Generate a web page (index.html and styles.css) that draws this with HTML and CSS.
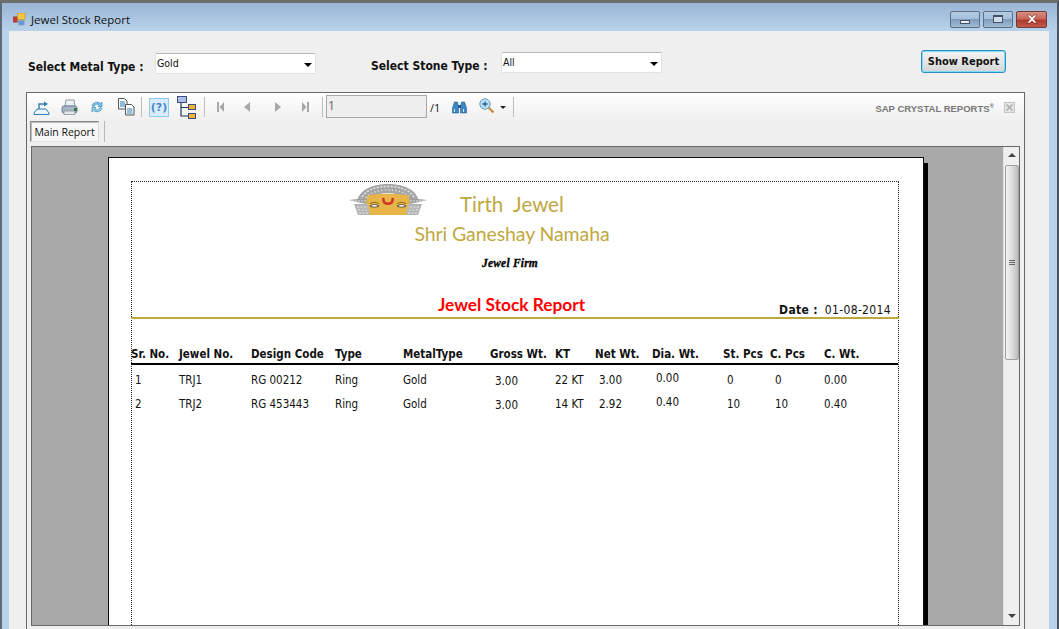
FILE: index.html
```html
<!DOCTYPE html>
<html lang="en">
<head>
<meta charset="utf-8">
<title>Jewel Stock Report</title>
<link rel="stylesheet" href="styles.css">
</head>
<body>
<div class="window">
  <header class="titlebar">
    <svg class="app-icon" width="13" height="13" viewBox="0 0 14 14"><rect x="0" y="4" width="5" height="6" fill="#c33" stroke="#777" stroke-width=".6"/><rect x="5" y="0" width="8" height="7" fill="#f3c640" stroke="#b58a20" stroke-width=".6"/><rect x="6" y="8" width="6" height="5" fill="#6b95dc" stroke="#8aa" stroke-width=".6"/></svg>
    <span class="window-title">Jewel Stock Report</span>
    <div class="caption-buttons">
      <div class="cap cap-min"><span class="min-glyph"></span></div>
      <div class="cap cap-max"><span class="max-glyph"></span></div>
      <div class="cap cap-close">
        <svg width="14" height="10" viewBox="0 0 14 10"><path d="M2 1h3l2 2.200L9 1h3L8.600 5 12 9H9L7 6.800 5 9H2l3.400-4z" fill="#fff" stroke="#6e2a22" stroke-width=".6"/></svg>
      </div>
    </div>
  </header>

  <main class="client">
    <section class="filters">
      <label class="filter-label metal-label">Select Metal Type :</label>
      <div class="combo metal-combo"><span>Gold</span><i class="combo-arrow"></i></div>
      <label class="filter-label stone-label">Select Stone Type :</label>
      <div class="combo stone-combo"><span>All</span><i class="combo-arrow"></i></div>
      <button class="show-btn">Show Report</button>
    </section>

    <section class="viewer">
      <div class="toolbar">
        <svg class="tb t-export" width="17" height="17" viewBox="0 0 17 17"><path d="M1 15.500h15V14L13 10H4L1 14z" fill="#e8f3fb" stroke="#2f7fb5"/><path d="M6 10V5h6" fill="none" stroke="#2f7fb5" stroke-width="1.400"/><path d="M11 2.500l4 2.500-4 2.500z" fill="#2f7fb5"/></svg>
        <svg class="tb t-print" width="17" height="17" viewBox="0 0 17 17"><path d="M5 1h8l1 6H4z" fill="#eef2f6" stroke="#8f9aa6"/><rect x="1" y="7" width="15" height="7" rx="2" fill="#a9b6c5" stroke="#6f7f92"/><rect x="3" y="12" width="11" height="3.500" fill="#e4e9ee" stroke="#7b8794" stroke-width=".7"/><rect x="13" y="9" width="3" height="3" fill="#2c7a3e"/></svg>
        <svg class="tb t-refresh" width="14" height="14" viewBox="0 0 14 14"><path d="M2 6a5 4.500 0 0 1 8.500-2.500L12 2v4.500H8l1.300-1.500A3.200 3 0 0 0 4 6.500z" fill="#7cc4e6" stroke="#3b8fb8" stroke-width=".7"/><path d="M12 8a5 4.500 0 0 1-8.500 2.500L2 12V7.500h4L4.700 9A3.200 3 0 0 0 10 7.500z" fill="#9ad3ec" stroke="#3b8fb8" stroke-width=".7"/></svg>
        <svg class="tb t-copy" width="18" height="18" viewBox="0 0 18 18"><path d="M1.500.500h6L10 3v8H1.500z" fill="#f5f7f9" stroke="#555"/><path d="M3 4h5M3 6h5M3 8h5" stroke="#2f7fb5"/><path d="M8.500 6.500h6L17 9v8H8.500z" fill="#fff" stroke="#555"/><path d="M10 11h5.500M10 13h5.500M10 15h5.500" stroke="#2f7fb5"/></svg>
        <i class="tb-sep sep-a"></i>
        <div class="help-btn">(?)</div>
        <svg class="tb t-tree" width="20" height="23" viewBox="0 0 20 23"><rect x=".5" y=".5" width="9" height="6" fill="#a8c0e8" stroke="#3a4d7c"/><path d="M4 7v13h7M4 11.500h7" fill="none" stroke="#1f3560" stroke-width="1.200"/><rect x="11.500" y="8.500" width="7" height="5" fill="#f2b53a" stroke="#3a4d7c"/><rect x="11.500" y="17.500" width="7" height="5" fill="#f2b53a" stroke="#3a4d7c"/></svg>
        <i class="tb-sep sep-b"></i>
        <svg class="tb t-first" width="7" height="10" viewBox="0 0 7 10"><path d="M0 0h2v10H0zM7 0v10L2.500 5z" fill="#a8a8a8"/></svg>
        <svg class="tb t-prev" width="6" height="10" viewBox="0 0 6 10"><path d="M6 0v10L0 5z" fill="#a8a8a8"/></svg>
        <svg class="tb t-next" width="6" height="10" viewBox="0 0 6 10"><path d="M0 0v10l6-5z" fill="#a8a8a8"/></svg>
        <svg class="tb t-last" width="7" height="10" viewBox="0 0 7 10"><path d="M5 0h2v10H5zM0 0v10l4.500-5z" fill="#a8a8a8"/></svg>
        <i class="tb-sep sep-c"></i>
        <div class="page-input">1</div>
        <span class="page-total">/1</span>
        <svg class="tb t-find" width="15" height="13" viewBox="0 0 15 13"><path d="M2.500 1h3l1 5v6h-6V7zM9.500 1h3l2 6v5h-6V6z" fill="#3f86c4" stroke="#1f5f96" stroke-width=".6"/><rect x="6" y="4" width="3" height="3" fill="#1f5f96"/><path d="M2.500 8v3M11.500 8v3" stroke="#cfe6f7"/></svg>
        <svg class="tb t-zoom" width="16" height="16" viewBox="0 0 16 16"><path d="M9.500 9.500l5 5" stroke="#c98d43" stroke-width="2.400"/><circle cx="6" cy="6" r="5.200" fill="#bfe0f4" stroke="#5f9cc4"/><path d="M3.500 6h5M6 3.500v5" stroke="#1f5f96" stroke-width="1.300"/></svg>
        <i class="drop-arrow"></i>
        <i class="tb-sep sep-d"></i>
        <span class="brand">SAP CRYSTAL REPORTS<sup>®</sup></span>
        <svg class="tb t-closex" width="11" height="11" viewBox="0 0 11 11"><rect x=".5" y=".5" width="10" height="10" fill="#e4e4e4" stroke="#c4c4c4"/><path d="M2.500 2.500l6 6M8.500 2.500l-6 6" stroke="#a8a8a8" stroke-width="1.300"/></svg>
      </div>

      <div class="tabstrip">
        <div class="tab">Main Report</div>
        <i class="tab-sep"></i>
      </div>

      <div class="canvas">
        <div class="canvas-scroll">
          <article class="page">
            <div class="printable">
              <div class="brand-row">
                <svg class="logo" width="78" height="32" viewBox="0 0 78 32">
                  <path d="M8 18C10 5 25 0 39 0s29 5 31 18l-9 1C58 13 49 9 39 9s-19 4-22 10z" fill="#a4a4a4"/>
                  <path d="M12 16C15 6 27 2.500 39 2.500S63 6 66 16" fill="none" stroke="#e6e6e6" stroke-width="1.500" stroke-dasharray="2 1.500"/>
                  <path d="M15 17C18 9 29 6 39 6s21 3 24 11" fill="none" stroke="#dcdcdc" stroke-width="1.500" stroke-dasharray="1.500 2"/>
                  <path d="M0 16l18-2 3 3-4 3zM78 16l-18-2-3 3 4 3z" fill="#9c9c9c"/>
                  <path d="M3 17h14M61 17h14" stroke="#e4e4e4" stroke-dasharray="2 1"/>
                  <path d="M18 12C25 9 53 9 60 12l2 19H16z" fill="#e8b548"/>
                  <path d="M33 14c0 5 2 7 6 7s6-2 6-7h-2.500c0 3-1 4.500-3.500 4.500S35.500 17 35.500 14z" fill="#d1372e"/>
                  <path d="M5 20h14l2 11H9z" fill="#b5b5b5"/>
                  <path d="M73 20H59l-2 11h12z" fill="#b5b5b5"/>
                  <path d="M8 23h11M9 26h11M10 29h10M70 23H59M69 26H58M68 29H58" stroke="#e8e8e8" stroke-dasharray="2 1.500"/>
                  <path d="M21 22c3-2 6-2 9 0-3 1.500-6 1.500-9 0zM57 22c-3-2-6-2-9 0 3 1.500 6 1.500 9 0z" fill="#fff" stroke="#333" stroke-width=".8"/>
                  <path d="M21 19.500c3-1.500 6-1.500 9 0M57 19.500c-3-1.500-6-1.500-9 0" fill="none" stroke="#6b4a10" stroke-width=".7"/>
                </svg>
                <h1 class="firm-name">Tirth&nbsp; Jewel</h1>
              </div>
              <h2 class="blessing">Shri Ganeshay Namaha</h2>
              <p class="firm-sub">Jewel Firm</p>
              <div class="report-head">
                <h3 class="report-title">Jewel Stock Report</h3>
                <p class="report-date"><b>Date :</b> 01-08-2014</p>
              </div>
              <hr class="gold-rule">
              <div class="grid grid-head">
                <span>Sr. No.</span><span>Jewel No.</span><span>Design Code</span><span>Type</span><span>MetalType</span><span>Gross Wt.</span><span>KT</span><span>Net Wt.</span><span>Dia. Wt.</span><span>St. Pcs</span><span>C. Pcs</span><span>C. Wt.</span>
              </div>
              <div class="grid grid-row row-one">
                <span class="c-in">1</span><span>TRJ1</span><span>RG 00212</span><span>Ring</span><span>Gold</span><span class="c-in5 c-low">3.00</span><span>22 KT</span><span class="c-in">3.00</span><span class="c-in c-up">0.00</span><span class="c-in">0</span><span class="c-in5">0</span><span>0.00</span>
              </div>
              <div class="grid grid-row">
                <span class="c-in">2</span><span>TRJ2</span><span>RG 453443</span><span>Ring</span><span>Gold</span><span class="c-in5 c-low">3.00</span><span>14 KT</span><span class="c-in">2.92</span><span class="c-in c-up">0.40</span><span class="c-in">10</span><span class="c-in5">10</span><span>0.40</span>
              </div>
            </div>
          </article>
        </div>
        <div class="scrollbar">
          <i class="sb-up"></i>
          <div class="sb-thumb"><i class="grip"></i></div>
          <i class="sb-down"></i>
        </div>
      </div>
    </section>
  </main>
</div>
</body>
</html>
```

FILE: styles.css
```css
* { box-sizing: border-box; }
html, body { margin: 0; padding: 0; }
body { width: 1059px; height: 629px; overflow: hidden; background: #fff; font-family: "DejaVu Sans", sans-serif; }
i { display: block; }
h1, h2, h3, p { margin: 0; font-weight: normal; }

.window {
  width: 1059px; height: 629px; overflow: hidden;
  display: flex; flex-direction: column;
  border-top: 3px solid #6d6d6d;
  border-left: 2px solid #5f6b78;
  border-right: 2px solid #4a5560;
  background: linear-gradient(180deg, #9ab6d5 0, #b9d2eb 28px);
  padding: 0 8px 0 7px;
}
.titlebar { height: 28px; flex: none; display: flex; align-items: center; padding-left: 5px; margin-left: -1px; }
.app-icon { margin-right: 5px; margin-top: 5px; }
.window-title { font: 11.500px "Open Sans", sans-serif; color: #111; margin-top: 4px; }
.caption-buttons { margin-left: auto; display: flex; gap: 3px; margin-top: 4px; margin-right: 2px; }
.cap { height: 17px; border: 1px solid #5c6e83; border-radius: 2px; display: flex; align-items: center; justify-content: center; }
.cap-min, .cap-max { width: 30px; background: linear-gradient(180deg, #b4cce4 0, #a4bfdb 45%, #7f9cbb 50%, #a2bcd8 100%); }
.cap-close { width: 31px; background: linear-gradient(180deg, #d98f82 0, #c9675a 45%, #ae3b2e 55%, #c05a4c 100%); border-color: #6e3b36; }
.min-glyph { width: 10px; height: 4px; background: #e8eef5; border: 1px solid #44505e; margin-top: 5px; }
.max-glyph { width: 10px; height: 8px; border: 1px solid #44505e; border-top-width: 2px; background: #cfdcea; }

.client { flex: 1; background: #efefef; display: flex; flex-direction: column; padding: 0 24px 0 17px; min-height: 0; }

.filters { height: 61px; flex: none; display: flex; align-items: flex-start; }
.filter-label { font: 700 12px "DejaVu Sans", sans-serif; font-stretch: condensed; color: #111; white-space: nowrap; }
.metal-label { width: 127px; padding-top: 29px; margin-left: 2px; }
.stone-label { width: 130px; padding-top: 28px; }
.combo { width: 161px; height: 21px; background: #fff; border: 1px solid #dfe2e8; border-top-color: #b8b8c0; border-radius: 2px; display: flex; align-items: flex-start; justify-content: space-between; font: 10.500px "DejaVu Sans", sans-serif; font-stretch: condensed; color: #111; padding: 3px 3px 0 1px; }
.metal-combo { margin-top: 22px; margin-right: 55px; }
.stone-combo { margin-top: 21px; }
.combo-arrow { width: 0; height: 0; border: 4px solid transparent; border-top: 4px solid #000; border-bottom: 0; margin-top: 6px; }
.show-btn { margin-left: 259px; margin-top: 19px; width: 85px; height: 23px; border: 1px solid #2e8ec0; box-shadow: inset 0 0 0 1px #7ddcf5; border-radius: 3px; background: linear-gradient(180deg, #f2f2f2 0, #e6e6e6 50%, #d4d4d4 100%); font: 700 11px "DejaVu Sans", sans-serif; font-stretch: condensed; color: #111; padding: 0; }

.viewer { flex: 1; min-height: 0; display: flex; flex-direction: column; border: 1px solid #696969; border-bottom: 0; width: 999px; background: #efefef; }
.toolbar { height: 28px; flex: none; display: flex; align-items: center; background: linear-gradient(180deg, #fff 0, #f0f0f0 26px); padding-left: 6px; }
.tb { flex: none; display: block; }
.t-export { margin-right: 11px; }
.t-print { margin-right: 12px; }
.t-refresh { margin-right: 13px; }
.t-copy { margin-right: 6px; }
.tb-sep { width: 1px; height: 20px; background: #bdbdbd; flex: none; }
.sep-a { margin-right: 7px; }
.help-btn { width: 20px; height: 19px; background: #d8ecfb; border: 1px solid #8fcaf0; color: #4a86c8; font: 700 11px "DejaVu Sans", sans-serif; text-align: center; line-height: 17px; margin-right: 8px; flex: none; }
.t-tree { margin-right: 7px; }
.sep-b { margin-right: 12px; }
.t-first { margin-right: 20px; }
.t-prev { margin-right: 25px; }
.t-next { margin-right: 21px; }
.t-last { margin-right: 13px; }
.sep-c { margin-right: 3px; }
.page-input { width: 101px; height: 23px; background: #eee; border: 1px solid #a8a8a8; font: 12px "Open Sans", sans-serif; color: #666; padding-left: 1px; line-height: 19px; flex: none; margin-right: 3px; margin-top: -2px; }
.page-total { font: 11px "Open Sans", sans-serif; color: #111; margin-right: 11px; width: 11px; }
.t-find { margin-right: 12px; }
.t-zoom { margin-right: 5px; margin-top: -3px; }
.drop-arrow { width: 0; height: 0; border: 3px solid transparent; border-top: 3px solid #222; border-bottom: 0; margin-right: 7px; }
.brand { margin-left: auto; font: 700 9.500px "Liberation Sans", sans-serif; color: #777; white-space: nowrap; margin-right: 10px; margin-top: 3px; }
.brand sup { font-size: 6px; line-height: 0; }
.t-closex { margin-right: 9px; }

.tabstrip { height: 25px; flex: none; display: flex; align-items: flex-start; padding-left: 3px; }
.tab { width: 69px; height: 21px; border: 1px solid #8a8a8a; border-right-color: #d8d8d8; border-bottom-color: #e4e4e4; background: #f7f7f7; box-shadow: inset 1px 1px 0 #bbb; font: 10.500px/20px "Open Sans", sans-serif; color: #111; text-align: center; white-space: nowrap; }
.tab-sep { width: 1px; height: 21px; background: #b8b8b8; margin-left: 5px; }

.canvas { flex: 1; min-height: 0; margin: 0 4px 3px 4px; border: 1px solid #696969; display: flex; background: #a9a9a9; }
.canvas-scroll { flex: 1; min-width: 0; padding: 10px 0 0 76px; overflow: hidden; }
.scrollbar { width: 16px; flex: none; background: #efefef; border-left: 1px solid #e2e2e2; display: flex; flex-direction: column; align-items: center; }
.sb-up { width: 0; height: 0; border: 4px solid transparent; border-bottom: 4px solid #444; border-top: 0; margin-top: 6px; }
.sb-thumb { width: 14px; height: 195px; margin-top: 8px; margin-left: 1px; border: 1px solid #a0a0a0; border-radius: 2px; background: linear-gradient(90deg, #f4f4f4 0, #dcdcdc 50%, #bcbcbc 100%); display: flex; align-items: center; justify-content: center; }
.grip { width: 6px; height: 6px; background: repeating-linear-gradient(180deg, #666 0 1px, transparent 1px 2px); }
.sb-down { width: 0; height: 0; border: 4px solid transparent; border-top: 4px solid #444; border-bottom: 0; margin-top: auto; margin-bottom: 7px; }

.page { width: 816px; height: 600px; background: #fff; box-shadow: 4px 6px 0 #000; border: 1px solid #111; border-bottom: 0; padding: 23px 25px 0 22px; }
.printable { width: 768px; height: 560px; border: 1px dotted #222; border-bottom: 0; }

.brand-row { height: 33px; display: flex; align-items: flex-start; padding: 2px 0 0 217px; }
.logo { flex: none; margin-right: 33px; }
.firm-name { font: 20.500px/30px Lato, sans-serif; color: #bfa842; white-space: nowrap; margin-top: 5px; }
.blessing { font: 19.500px/26px Lato, sans-serif; color: #bfa842; text-align: center; padding-right: 6px; margin-top: 6px; letter-spacing: -.1px; }
.firm-sub { font: italic 700 11.500px/14px "Liberation Serif", serif; color: #000; text-align: center; margin-top: 9px; letter-spacing: .2px; padding-right: 10px; -webkit-text-stroke: .3px #000; }
.report-head { display: flex; height: 27px; margin-top: 18px; position: relative; }
.report-title { font: 700 17.300px/26px Lato, sans-serif; color: #f00; width: 100%; text-align: center; padding: 4px 7px 0 0; }
.report-date { position: absolute; right: 7px; top: 14px; font: 12px/16px "DejaVu Sans", sans-serif; font-stretch: condensed; color: #111; white-space: nowrap; letter-spacing: .35px; }
.report-date b { margin-right: 3px; }
.gold-rule { margin: 2px -1px 0; height: 2px; border: 0; background: #bda83f; }

.grid { display: grid; margin-left: -1px; grid-template-columns: 48px 72px 84px 68px 87px 65px 40px 57px 71px 47px 54px 75px; white-space: nowrap; color: #111; }
.grid-head { margin-top: 27px; height: 19px; border-bottom: 2px solid #000; font: 700 11.500px/14px "DejaVu Sans", sans-serif; font-stretch: condensed; padding-top: 1px; }
.grid-row { font: 11.500px/14px "DejaVu Sans", sans-serif; font-stretch: condensed; height: 24px; }
.row-one { margin-top: 8px; }
.c-in { padding-left: 4px; }
.c-in5 { padding-left: 5px; }
.c-up { margin-top: -2px; }
.c-low { margin-top: 1px; }
```
